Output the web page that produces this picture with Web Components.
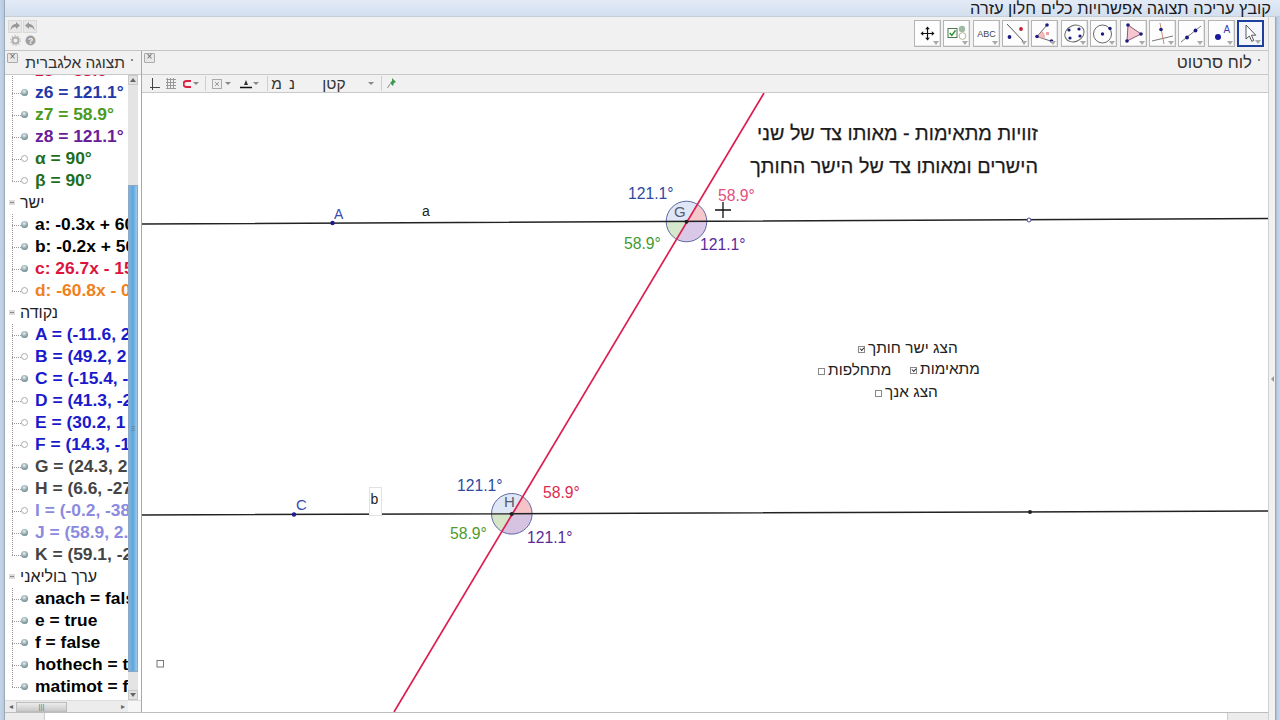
<!DOCTYPE html>
<html lang="he">
<head>
<meta charset="utf-8">
<title>GeoGebra</title>
<style>
html,body{margin:0;padding:0;width:1280px;height:720px;overflow:hidden;background:#f0f0f0;font-family:"Liberation Sans",Arial,sans-serif}
</style>
</head>
<body>
<gg-app></gg-app>
<script>
const FONT='"Liberation Sans",Arial,sans-serif';
const ICONS={
 move:`<path d="M13.5 8v11M8 13.5h11" stroke="#111" stroke-width="1.2"/><path d="M13.5 6.500l-2.300 2.700h4.600zM13.5 20.500l-2.300-2.700h4.600zM6.500 13.500l2.700-2.300v4.600zM20.500 13.500l-2.700-2.300v4.600z" fill="#111"/>`,
 check:`<rect x="5" y="8.500" width="9" height="9" fill="#fff" stroke="#4a7a4a"/><path d="M6.800 13l2 2.400 3.700-5" fill="none" stroke="#1f8f2f" stroke-width="1.500"/><circle cx="19" cy="9" r="3.200" fill="#9fb9a5"/><circle cx="19.500" cy="16" r="3.400" fill="#fff" stroke="#b5b59a"/>`,
 text:`<text x="13.500" y="17" text-anchor="middle" font-family="Liberation Sans, sans-serif" font-size="9" fill="#445">ABC</text>`,
 slope:`<path d="M5 4l18 19" stroke="#555" stroke-width="1"/><circle cx="7.500" cy="17" r="1.900" fill="#1a1a80"/><circle cx="19" cy="9" r="1.900" fill="#c02030"/>`,
 angle:`<path d="M6 16.500L16 5M6 16.500l15 5" stroke="#666" fill="none"/><path d="M11 11.500a7 7 0 0 1 2 7.200l-7-2.200z" fill="#f3c0c0" stroke="#d08080" stroke-width=".6"/><rect x="15" y="12" width="3" height="3" fill="#f0a0a0"/><circle cx="16" cy="5" r="1.800" fill="#1a1a80"/><circle cx="6" cy="16.500" r="1.800" fill="#1a1a80"/><circle cx="20.500" cy="21" r="1.800" fill="#1a1a80"/>`,
 conic:`<ellipse cx="13.500" cy="13.500" rx="10" ry="8" transform="rotate(-25 13.500 13.500)" fill="none" stroke="#666"/><circle cx="8" cy="10" r="1.600" fill="#1a1a80"/><circle cx="18" cy="9" r="1.600" fill="#1a1a80"/><circle cx="9" cy="18" r="1.600" fill="#1a1a80"/><circle cx="19" cy="16" r="1.600" fill="#1a1a80"/>`,
 circle:`<circle cx="12.500" cy="14" r="9" fill="none" stroke="#666"/><circle cx="12.500" cy="14" r="1.700" fill="#1a1a80"/><circle cx="20" cy="8.500" r="1.700" fill="#1a1a80"/>`,
 poly:`<path d="M8 5l13 9-14 7z" fill="#f7c5d0" stroke="#8a5a7a"/><circle cx="8" cy="5" r="1.800" fill="#1a1a80"/><circle cx="21" cy="14" r="1.800" fill="#1a1a80"/><circle cx="7" cy="21" r="1.800" fill="#1a1a80"/>`,
 perp:`<path d="M3 21l21-5" stroke="#777"/><path d="M11 3l4 21" stroke="#c98a78"/><circle cx="12" cy="9.500" r="1.800" fill="#1a1a80"/>`,
 line:`<path d="M3 22L23 6" stroke="#777"/><circle cx="9" cy="17.500" r="1.900" fill="#1a1a80"/><circle cx="17.500" cy="10.500" r="1.900" fill="#1a1a80"/>`,
 point:`<circle cx="10" cy="17" r="3" fill="#1a1a9a"/><text x="15.500" y="13" font-family="Liberation Sans, sans-serif" font-size="10" fill="#3a3ac0">A</text>`,
 arrow:`<path d="M9 5v14l3.400-3 2.400 5.400 2-1-2.400-5.200h4.400z" fill="#fff" stroke="#444" stroke-width=".9"/>`
};

class Base extends HTMLElement{
 constructor(html){super();this.attachShadow({mode:'open'}).innerHTML=html;}
}
class GgMenubar extends Base{constructor(){super(`<style>
:host{display:flex;justify-content:flex-end;align-items:center;height:16px;margin-right:-12px;padding-right:9px;background:linear-gradient(#e3ebf6,#d3dfef);border-bottom:1px solid #c8ced6;font:16.4px ${FONT};color:#1a1a1a;direction:ltr}
span{direction:rtl}
</style><span>קובץ עריכה תצוגה אפשרויות כלים חלון עזרה</span>`);}}
class GgToolButton extends Base{constructor(){super(`<style>
:host{display:block;position:relative;width:27px;height:27px;box-sizing:border-box;background:#fdfdfd;border:1px solid #b4b4b4;box-shadow:inset -1px -1px 0 #e6e6e6}
:host([selected]){border:2px solid #1f3f9f;background:#f4f6fb;box-shadow:none}
svg{position:absolute;left:-1px;top:-1px;width:27px;height:27px}
:host([selected]) svg{left:-2px;top:-2px}
.t{position:absolute;right:1px;bottom:1px;width:0;height:0;border:3px solid transparent;border-top:4px solid #aaa;border-bottom:0}
</style><svg viewBox="0 0 27 27"></svg><i class="t"></i>`);}
 connectedCallback(){this.shadowRoot.querySelector('svg').innerHTML=ICONS[this.getAttribute('icon')]||'';}
}
class GgToolbar extends Base{constructor(){super(`<style>
:host{display:flex;justify-content:space-between;height:33px;box-sizing:border-box;background:#f1f1f1;padding:3px 4px 0 3px}
.hist{display:grid;grid-template-columns:14px 14px;column-gap:1px;grid-auto-rows:min-content;row-gap:2px}
.h{width:14px;height:13px;background:#e7e7e7;border:1px solid #d8d8d8;box-sizing:border-box;display:flex;align-items:center;justify-content:center}
.g{width:14px;height:11px;display:flex;align-items:center;justify-content:center}
.tools{display:flex;gap:2.36px}
</style>
<div class="hist">
<div class="h"><svg width="12" height="11" viewBox="0 0 12 11"><path d="M7 1l4 3.500L7 8V6C4 6 2.500 7 1.500 9.500 1.500 5.500 4 3 7 3z" fill="#999"/></svg></div>
<div class="h"><svg width="12" height="11" viewBox="0 0 12 11"><path d="M5 1L1 4.500 5 8V6c3 0 4.500 1 5.500 3.500C10.500 5.500 8 3 5 3z" fill="#999"/></svg></div>
<div class="g"><svg width="11" height="11" viewBox="0 0 11 11"><circle cx="5.500" cy="5.500" r="3" fill="none" stroke="#b0b0b0" stroke-width="2"/><circle cx="5.500" cy="5.500" r="4.800" fill="none" stroke="#c0c0c0" stroke-width="1.200" stroke-dasharray="1.500 1.500"/></svg></div>
<div class="g"><svg width="11" height="11" viewBox="0 0 11 11"><circle cx="5.500" cy="5.500" r="5" fill="#a0a0a0"/><text x="5.500" y="9" text-anchor="middle" font-family="Liberation Sans, sans-serif" font-weight="700" font-size="8.500" fill="#f4f4f4">?</text></svg></div>
</div>
<div class="tools"><slot></slot></div>`);}}

class GgTreeItem extends Base{constructor(){super(`<style>
:host{display:flex;align-items:center;height:22px;position:relative;font:bold 17.4px ${FONT};white-space:nowrap;direction:ltr}
.h{position:absolute;left:7px;top:11px;width:9px;border-top:1px dotted #9a9a9a}
.d{position:absolute;left:16px;top:7px;width:7px;height:7px;border-radius:50%;background:radial-gradient(circle at 45% 35%,#e4eef0,#7f9aa0 60%,#5f7a80);}
:host([off]) .d{background:#fff;border:1px solid #aaa;box-sizing:border-box}
.l{position:absolute;left:30px;top:1px;line-height:18px}
</style><i class="h"></i><i class="d"></i><span class="l"><slot></slot></span>`);}
 connectedCallback(){this.style.color=this.getAttribute('color')||'#000';}
}
class GgTreeGroup extends Base{constructor(){super(`<style>
:host{display:block;position:relative}
.hd{height:22px;box-sizing:border-box;display:flex;align-items:center;font:16px ${FONT};color:#222;padding-left:15px;position:relative;direction:ltr}
.hd span{direction:rtl}
.m{position:absolute;left:4px;top:8px;width:6px;height:5px;background:#dcdcdc}
.m::after{content:"";position:absolute;left:1px;right:1px;top:2px;height:1px;background:#888}
.items{position:relative}
.items::before{content:"";position:absolute;left:7px;top:0;bottom:11px;border-left:1px dotted #9a9a9a}
:host([nohead]) .hd{display:none}
</style><div class="hd"><i class="m"></i><span id="t"></span></div><div class="items"><slot></slot></div>`);}
 connectedCallback(){this.shadowRoot.getElementById('t').textContent=this.getAttribute('label')||'';}
}
class GgPanelHeader extends Base{constructor(){super(`<style>
:host{display:flex;height:24px;box-sizing:border-box;align-items:flex-start;justify-content:space-between;background:#f1f1f1;color:#333;font:15.5px ${FONT};border-bottom:1px solid #c9c9c9}
:host([wide]){font-size:16.800px}
.x{width:9px;height:8px;border:1px solid #aaa;margin:2px 0 0 2px;background:#e8e8e8;border-radius:1px;position:relative;flex:none}
.x::after{content:"×";position:absolute;left:0;right:0;top:-3px;text-align:center;font:10px/12px ${FONT};color:#666}
.r{display:flex;align-items:center;height:23px;gap:6px;direction:ltr}
.r b{font-weight:400;direction:rtl}
.r i{width:2px;height:2px;background:#888;margin-right:8px;margin-top:-6px;flex:none}
</style><span class="x"></span><span class="r"><b><slot></slot></b><i></i></span>`);}}

class GgAlgebra extends Base{constructor(){super(`<style>
:host{display:flex;flex-direction:column;width:137px;flex:none;box-sizing:border-box;background:#fff;border-right:1px solid #a8a8a8}
.body{flex:1;display:grid;grid-template-columns:123px 10px 3px;grid-template-rows:1fr;min-height:0;background:#fff}
.tree{overflow:hidden;min-height:0;background:#fff}
.inner{margin-top:-15px}
.vs{display:flex;flex-direction:column;background:#e4e4e4}
.btn{height:10px;flex:none;background:#e2e2e2;border:1px solid #c8c8c8;box-sizing:border-box;display:flex;align-items:center;justify-content:center}
.track{flex:1;min-height:0;display:flex;flex-direction:column}
.sp1{height:100px;flex:none}
.thumb{height:487px;flex:none;background:linear-gradient(90deg,#7fb6e2,#5da5dc 50%,#9ccbee);border:1px solid #8aa8c4;box-sizing:border-box;position:relative}
.thumb::after{content:"";position:absolute;left:2px;right:2px;top:240px;height:5px;background:repeating-linear-gradient(#6f8ca5 0 1px,transparent 1px 2px)}
.sp2{flex:1}
.hs{height:12px;flex:none;display:flex;align-items:center;background:#ececec;border-top:1px solid #ddd;box-sizing:border-box}
.hs .a{width:11px;flex:none;text-align:center;font:8px/10px ${FONT};color:#666}
.hthumb{width:51px;height:10px;flex:none;background:linear-gradient(#ececec,#c8c8c8);border:1px solid #bcbcbc;box-sizing:border-box;display:flex;align-items:center;justify-content:center;font:8px/8px ${FONT};color:#777}
.hsp{flex:1}
.end{width:13px;height:100%;background:#f6f6f6;flex:none}
</style>
<slot name="head"></slot>
<div class="body"><div class="tree"><div class="inner"><slot></slot></div></div>
<div class="vs"><div class="btn"><svg width="6" height="4"><path d="M3 0l3 4H0z" fill="#666"/></svg></div>
<div class="track"><div class="sp1"></div><div class="thumb"></div><div class="sp2"></div></div>
<div class="btn"><svg width="6" height="4"><path d="M3 4l3-4H0z" fill="#666"/></svg></div></div><div></div></div>
<div class="hs"><span class="a">◂</span><div class="hthumb">|||</div><div class="hsp"></div><span class="a">▸</span><div class="end"></div></div>`);}
 connectedCallback(){
  const data=[
   ['',[['z5 = 58.9°','#dc143c'],['z6 = 121.1°','#2238a8'],['z7 = 58.9°','#4a9a20'],['z8 = 121.1°','#6a1b9a'],['α = 90°','#1e6e1e',1],['β = 90°','#1e6e1e',1]]],
   ['ישר',[['a: -0.3x + 60','#000'],['b: -0.2x + 56','#000'],['c: 26.7x - 15','#dc143c'],['d: -60.8x - 0','#f08020',1]]],
   ['נקודה',[['A = (-11.6, 2','#1a1acc'],['B = (49.2, 2','#1a1acc',1],['C = (-15.4, -','#1a1acc'],['D = (41.3, -2','#1a1acc',1],['E = (30.2, 1','#1a1acc',1],['F = (14.3, -1','#1a1acc',1],['G = (24.3, 2','#444'],['H = (6.6, -27','#444'],['I = (-0.2, -38','#8a8ae0',1],['J = (58.9, 2.','#8a8ae0'],['K = (59.1, -2','#444']]],
   ['ערך בוליאני',[['anach = false','#000'],['e = true','#000'],['f = false','#000'],['hothech = true','#000'],['matimot = false','#000']]]
  ];
  for(const [label,items] of data){
   const g=document.createElement('gg-tree-group');
   if(label)g.setAttribute('label',label);else g.setAttribute('nohead','');
   for(const [t,c,off] of items){
    const it=document.createElement('gg-tree-item');
    it.setAttribute('color',c);if(off)it.setAttribute('off','');
    it.textContent=t;g.appendChild(it);
   }
   this.appendChild(g);
  }
 }
}

class GgGfxToolbar extends Base{constructor(){super(`<style>
:host{display:flex;align-items:center;height:17px;background:#f1f1f1;border-bottom:1px solid #c9c9c9;font:15.5px ${FONT};color:#333;padding-left:8px;position:relative}
svg{display:block;flex:none}
.s{width:1px;height:15px;background:#cfcfcf;flex:none}
.tr{width:0;height:0;border:3px solid transparent;border-top:3px solid #888;border-bottom:0;flex:none}
.he{direction:rtl;flex:none}
</style>
<svg width="10" height="12" viewBox="0 0 10 12" style="margin-right:6px"><path d="M2.500 0v12M0 9.500h10" fill="none" stroke="#444"/></svg>
<svg width="10" height="11" viewBox="0 0 10 11" style="margin-right:7px"><path d="M1.500 0v11M4.500 0v11M7.500 0v11M0 1.500h10M0 4.500h10M0 7.500h10M0 10.500h10" stroke="#999"/></svg>
<svg width="8" height="8" viewBox="0 0 8 8" style="margin-right:2px"><path d="M8 1H3.500a3 3 0 0 0 0 6H8" fill="none" stroke="#dc2040" stroke-width="2"/></svg>
<i class="tr" style="margin-right:6px"></i><i class="s" style="margin-right:6px"></i>
<svg width="10" height="10" viewBox="0 0 10 10" style="margin-right:3px"><rect x=".5" y=".5" width="9" height="9" fill="#eee" stroke="#aaa"/><path d="M3 3l4 4M7 3L3 7" stroke="#999"/></svg>
<i class="tr" style="margin-right:9px"></i>
<svg width="12" height="11" viewBox="0 0 12 11" style="margin-right:1px"><path d="M6 2L4 7h4z" fill="#333"/><path d="M0 9.500h12" stroke="#111" stroke-width="1.500"/></svg>
<i class="tr" style="margin-right:8px"></i><i class="s" style="margin-right:4px"></i>
<span class="he" style="width:10px;margin-right:6px;text-align:center">מ</span><span class="he" style="width:8px;text-align:center">נ</span>
<span class="he" style="margin-left:26px;width:24px;text-align:center">קטן</span>
<i class="tr" style="margin-left:22px;margin-right:7px"></i><i class="s" style="margin-right:5px"></i>
<svg width="9" height="11" viewBox="0 0 9 11"><path d="M5 0l4 4-2 1-1 3-3-3 2-2z" fill="#3c9a50"/><path d="M3 6L.5 10" stroke="#888"/></svg>`);}}

class GgCheck extends Base{constructor(){super(`<style>
:host{display:flex;align-items:center;position:absolute;font:15.4px/18px ${FONT};color:#222;white-space:nowrap;direction:ltr;gap:3px}
.b{width:5px;height:5px;border:1px solid #888;background:#fff;flex:none;position:relative;margin-top:3px}
:host([on]) .b::after{content:"";position:absolute;left:1px;top:0;width:3px;height:2px;border-left:1px solid #333;border-bottom:1px solid #333;transform:rotate(-45deg)}
span{direction:rtl}
</style><i class="b"></i><span><slot></slot></span>`);}}

function wedge(cx,cy,r,a1,a2,fill){
 const p=a=>[cx+r*Math.cos(a*Math.PI/180),cy+r*Math.sin(a*Math.PI/180)];
 const [x1,y1]=p(a1),[x2,y2]=p(a2);const lg=((a2-a1+360)%360)>180?1:0;
 return `<path d="M${cx} ${cy}L${x1} ${y1}A${r} ${r} 0 ${lg} 1 ${x2} ${y2}Z" fill="${fill}"/>`;
}
function angles(cx,cy,r,s){
 return wedge(cx,cy,r,-59,-0.3,s[0])+wedge(cx,cy,r,-0.3,121,s[1])+wedge(cx,cy,r,121,179.7,s[2])+wedge(cx,cy,r,179.7,301,s[3])
 +`<circle cx="${cx}" cy="${cy}" r="${r}" fill="none" stroke="#5f6aa5" stroke-width="1"/>`;
}
const lab=(x,y,t,c,fs=15.7)=>`<text x="${x}" y="${y}" fill="${c}" font-size="${fs}">${t}</text>`;
class GgCanvas extends Base{constructor(){super(`<style>
:host{display:block;position:relative;flex:1;min-height:0;background:#fff;overflow:hidden}
svg{display:block;position:absolute;left:0;top:0;width:1126px;height:619px;font-family:${FONT}}
.title{position:absolute;right:230px;font:19.8px/24px ${FONT};color:#1c1c1c;direction:rtl;white-space:nowrap;-webkit-text-stroke:.25px #1c1c1c}
</style>
<svg viewBox="142 93 1126 619" id="s"></svg>
<div class="title" style="top:28px">זוויות מתאימות - מאותו צד של שני</div>
<div class="title" style="top:61px">הישרים ומאותו צד של הישר החותך</div>
<slot></slot>`);
 const sG=['#f6c8cc','#d9c8e8','#d6e8cc','#dfe6f6'];
 const sH=['#f6c3c8','#d6c3e2','#d6e4c8','#dfe6f6'];
 this.shadowRoot.getElementById('s').innerHTML=
 angles(686.5,221.5,20.3,sG)+angles(511.8,513.8,20.3,sH)+
 `<path d="M142 224L1268 218.500M142 515L1268 511" stroke="#222" stroke-width="1.500" fill="none"/>
 <path d="M764 93L394 712" stroke="#dc1e50" stroke-width="1.700" fill="none"/>
 <circle cx="686.500" cy="221.800" r="2" fill="#222"/><circle cx="511.800" cy="514" r="2" fill="#222"/>
 <circle cx="332.500" cy="223" r="2.200" fill="#1c1c90"/><circle cx="294" cy="514.500" r="2.200" fill="#1c1c90"/>
 <circle cx="1029" cy="220" r="2" fill="#fff" stroke="#44449a"/><circle cx="1030" cy="512" r="2" fill="#222"/>
 <rect x="369.500" y="487.500" width="12" height="28" fill="#fff" stroke="#e2e2e2"/>
 <path d="M723 202v16M715 210h16" stroke="#111" stroke-width="1.300"/>
 <rect x="157" y="660.500" width="6.500" height="6.500" fill="#fff" stroke="#777"/>`+
 lab(334,219,'A','#3a4ab0',14)+lab(422,216,'a','#222',14)+lab(296,510,'C','#3a4ab0',15)+lab(370.5,504,'b','#222',14)+
 lab(674,217,'G','#555b70',15)+lab(504,507,'H','#555b70',15)+
 lab(628,199,'121.1°','#2f4aa0')+lab(718,201,'58.9°','#e2507c')+lab(624,249,'58.9°','#3f9a32')+lab(700,250,'121.1°','#5b2a9a')+
 lab(457,491,'121.1°','#2f4aa0')+lab(543,498,'58.9°','#dc2a50')+lab(450,539,'58.9°','#4f9a2a')+lab(527,543,'121.1°','#5b2a9a');
}}
class GgGfxPanel extends Base{constructor(){super(`<style>
:host{display:flex;flex-direction:column;flex:1;min-width:0;background:#f1f1f1}
</style><slot></slot>`);}}
class GgStatus extends Base{constructor(){super(`<style>
:host{display:flex;height:8px;box-sizing:border-box;border-top:1px solid #bdbdbd;background:#fff}
.a{width:40px;background:#ececec;border-right:1px solid #ccc;box-sizing:border-box}
.m{flex:1}
.b{width:41px;background:#ececec;border-left:1px solid #ccc;box-sizing:border-box}
</style><div class="a"></div><div class="m"></div><div class="b"></div>`);}}
class GgApp extends Base{constructor(){super(`<style>
:host{display:flex;width:1280px;height:720px;background:#f1f1f1;overflow:hidden}
.fl{width:5px;flex:none;background:linear-gradient(90deg,#c4d5e8,#b8cadf 70%,#8c9aa8)}
.fr{width:12px;flex:none;display:flex;background:#f1f1f1;position:relative;margin-top:17px}
.fr i{width:7px;background:#f1f1f1;border-left:1px solid #cfcfcf;box-sizing:border-box}
.fr b{flex:1;background:linear-gradient(90deg,#8d9db0,#b8cce2 40%,#c6d8ec)}
.fr u{position:absolute;left:3px;top:359px;border:3px solid transparent;border-right:3px solid #999;border-left:0}
.main{flex:1;display:flex;flex-direction:column;min-width:0}
.work{flex:1;display:flex;min-height:0;border-top:1px solid #c4c4c4}
</style>
<div class="fl"></div>
<div class="main">
<gg-menubar></gg-menubar>
<gg-toolbar>
<gg-tool-button icon="move"></gg-tool-button><gg-tool-button icon="check"></gg-tool-button><gg-tool-button icon="text"></gg-tool-button><gg-tool-button icon="slope"></gg-tool-button><gg-tool-button icon="angle"></gg-tool-button><gg-tool-button icon="conic"></gg-tool-button><gg-tool-button icon="circle"></gg-tool-button><gg-tool-button icon="poly"></gg-tool-button><gg-tool-button icon="perp"></gg-tool-button><gg-tool-button icon="line"></gg-tool-button><gg-tool-button icon="point"></gg-tool-button><gg-tool-button icon="arrow" selected></gg-tool-button>
</gg-toolbar>
<div class="work">
<gg-algebra>
<gg-panel-header slot="head">תצוגה אלגברית</gg-panel-header>
</gg-algebra>
<gg-gfx-panel>
<gg-panel-header wide>לוח סרטוט</gg-panel-header>
<gg-gfx-toolbar></gg-gfx-toolbar>
<gg-canvas>
<gg-check on style="left:716px;top:246px">הצג ישר חותך</gg-check>
<gg-check on style="left:768px;top:267px">מתאימות</gg-check>
<gg-check style="left:676px;top:268px">מתחלפות</gg-check>
<gg-check style="left:733px;top:290px">הצג אנך</gg-check>
</gg-canvas>
</gg-gfx-panel>
</div>
<gg-status></gg-status>
</div>
<div class="fr"><i></i><b></b><u></u></div>`);}}
const defs={'gg-menubar':GgMenubar,'gg-tool-button':GgToolButton,'gg-toolbar':GgToolbar,'gg-tree-item':GgTreeItem,'gg-tree-group':GgTreeGroup,'gg-panel-header':GgPanelHeader,'gg-algebra':GgAlgebra,'gg-gfx-toolbar':GgGfxToolbar,'gg-check':GgCheck,'gg-canvas':GgCanvas,'gg-gfx-panel':GgGfxPanel,'gg-status':GgStatus,'gg-app':GgApp};
for(const k in defs)customElements.define(k,defs[k]);
</script>
</body>
</html>
